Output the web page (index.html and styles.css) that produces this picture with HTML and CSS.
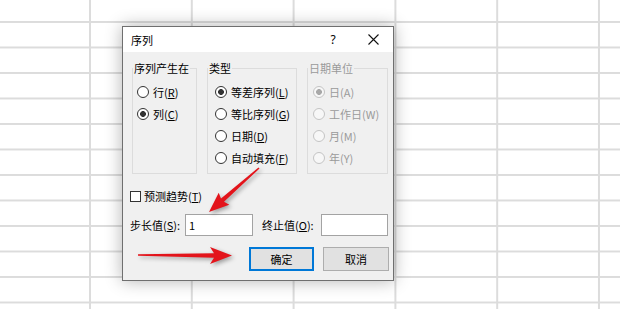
FILE: index.html
```html
<!DOCTYPE html>
<html lang="zh-CN">
<head>
    <meta charset="UTF-8">
    <meta name="viewport" content="width=device-width, initial-scale=1.0">
    <link rel="stylesheet" href="styles.css">
    <title>序列</title>
</head>
<body>

<div class="sheet"></div>

<!-- 序列 dialog -->
<div class="dialog">
    <div class="titlebar">
        <span class="title">序列</span>
        <span class="help">?</span>
        <span class="close">
            <svg width="11" height="11" viewBox="0 0 11 11">
                <path d="M0.5 0.5 L10.5 10.5 M10.5 0.5 L0.5 10.5" stroke="#111" stroke-width="1.1" fill="none"/>
            </svg>
        </span>
    </div>

    <div class="content">
        <div class="groups">
            <fieldset class="group g-where">
                <legend>序列产生在</legend>
                <div class="options">
                    <label class="opt"><input type="radio" name="where"><span>行(<u>R</u>)</span></label>
                    <label class="opt"><input type="radio" name="where" checked><span>列(<u>C</u>)</span></label>
                </div>
            </fieldset>

            <fieldset class="group g-type">
                <legend>类型</legend>
                <div class="options">
                    <label class="opt"><input type="radio" name="type" checked><span>等差序列(<u>L</u>)</span></label>
                    <label class="opt"><input type="radio" name="type"><span>等比序列(<u>G</u>)</span></label>
                    <label class="opt"><input type="radio" name="type"><span>日期(<u>D</u>)</span></label>
                    <label class="opt"><input type="radio" name="type"><span>自动填充(<u>F</u>)</span></label>
                </div>
            </fieldset>

            <fieldset class="group g-unit" disabled>
                <legend>日期单位</legend>
                <div class="options">
                    <label class="opt"><input type="radio" name="unit" checked><span>日(A)</span></label>
                    <label class="opt"><input type="radio" name="unit"><span>工作日(W)</span></label>
                    <label class="opt"><input type="radio" name="unit"><span>月(M)</span></label>
                    <label class="opt"><input type="radio" name="unit"><span>年(Y)</span></label>
                </div>
            </fieldset>
        </div>

        <label class="check"><input type="checkbox"><span>预测趋势(<u>T</u>)</span></label>

        <div class="fields">
            <label class="field-label step-label">步长值(<u>S</u>):</label>
            <input class="field step" type="text" value="1">
            <label class="field-label stop-label">终止值(<u>O</u>):</label>
            <input class="field stop" type="text" value="">
        </div>

        <div class="buttons">
            <button class="btn primary">确定</button>
            <button class="btn cancel">取消</button>
        </div>
    </div>
</div>

<!-- red annotation arrows -->
<svg class="arrows" width="620" height="309" viewBox="0 0 620 309">
    <polygon fill="#e3141b" points="259.5,168.6 224,201.8 229.3,204.8 209,212 218.7,192.8 221,198.5 258.5,167.4"/>
    <polygon fill="#e3141b" points="138,254.2 214,253.3 210,247 232,255.5 210,264 214,257.7 138,255.8"/>
</svg>

</body>
</html>
```

FILE: styles.css
```css
body {
    margin: 0;
    width: 620px;
    height: 309px;
    overflow: hidden;
    position: relative;
    background: #fff;
    font-family: "Noto Sans CJK SC", "Microsoft YaHei", sans-serif;
    font-size: 11px;
    line-height: 14px;
    color: #000;
}

/* spreadsheet grid behind the dialog */
.sheet {
    width: 620px;
    height: 309px;
    background-image:
        linear-gradient(to right, #dcdcdc 2px, transparent 2px),
        linear-gradient(to bottom, #dcdcdc 2px, transparent 2px);
    background-size: 101.8px 100%, 100% 25.5px;
    background-position: 89px 0, 0 21px;
}

.dialog {
    position: absolute;
    left: 122px;
    top: 26px;
    width: 272px;
    height: 255px;
    box-sizing: border-box;
    border: 1px solid #6f6f6f;
    background: #f0f0f0;
    box-shadow: 0 0 16px rgba(0, 0, 0, 0.3);
}

.titlebar {
    height: 25px;
    background: #fff;
    display: flex;
    align-items: center;
    padding-left: 8px;
}

.title {
    flex: 1;
}

.help {
    width: 20px;
    text-align: center;
    font-size: 12px;
    font-family: "Segoe UI", "Noto Sans", sans-serif;
}

.close {
    width: 20px;
    margin-left: 20px;
    margin-right: 10px;
    display: flex;
    justify-content: center;
}

.content {
    padding: 0 4px 0 7px;
}

.groups {
    display: flex;
    gap: 10px;
    margin: 9px 0 0 2px;
}

.group {
    margin: 0;
    padding: 0;
    min-width: 0;
    height: 113px;
    box-sizing: border-box;
    border: 1px solid #dcdcdc;
}

.group legend {
    padding: 0 1px;
    margin-left: 0;
    line-height: 14px;
}

.g-where { width: 65px; }
.g-type  { width: 90px; }
.g-unit  { width: 81px; }

.options {
    display: flex;
    flex-direction: column;
    padding: 6px 0 0 4px;
}

.g-type .options { padding-left: 7px; }
.g-unit .options { padding-left: 5px; }

.opt {
    height: 22px;
    display: flex;
    align-items: center;
    gap: 4px;
    white-space: nowrap;
}

input[type="radio"] {
    appearance: none;
    margin: 0;
    width: 12px;
    height: 12px;
    flex: none;
    box-sizing: border-box;
    border: 1px solid #333;
    border-radius: 50%;
    background: #fff;
}

input[type="radio"]:checked {
    background: radial-gradient(circle, #333 0 2.6px, #fff 3.2px);
}

.g-unit legend,
.g-unit .opt {
    color: #9a9a9a;
}

.g-unit input[type="radio"] {
    border-color: #c4c4c4;
    background: #f7f7f7;
}

.g-unit input[type="radio"]:checked {
    background: radial-gradient(circle, #a8a8a8 0 2.6px, #f7f7f7 3.2px);
}

.check {
    display: flex;
    align-items: center;
    gap: 3px;
    height: 14px;
    margin-top: 15px;
}

input[type="checkbox"] {
    appearance: none;
    margin: 0;
    width: 11px;
    height: 11px;
    box-sizing: border-box;
    border: 1px solid #333;
    background: #fff;
}

.fields {
    display: flex;
    align-items: center;
    margin-top: 11px;
}

.field-label {
    white-space: nowrap;
}

.step-label { width: 55px; }
.stop-label { width: 59px; margin-left: 9px; }

.field {
    height: 22px;
    box-sizing: border-box;
    border: 1px solid #a3a3a3;
    background: #fff;
    padding: 0 3px;
    font: inherit;
    color: #000;
    outline: none;
}

.step { width: 68px; }
.stop { width: 67px; }

.buttons {
    display: flex;
    justify-content: flex-end;
    gap: 9px;
    margin-top: 11px;
}

.btn {
    height: 24px;
    padding: 0;
    box-sizing: border-box;
    border: 1px solid #adadad;
    background: #e1e1e1;
    font: inherit;
    color: #000;
}

.primary {
    width: 65px;
    border: 2px solid #0078d7;
}

.cancel {
    width: 66px;
}

.arrows {
    position: absolute;
    left: 0;
    top: 0;
    pointer-events: none;
    filter: drop-shadow(2px 2px 2px rgba(0, 0, 0, 0.35));
}
```
